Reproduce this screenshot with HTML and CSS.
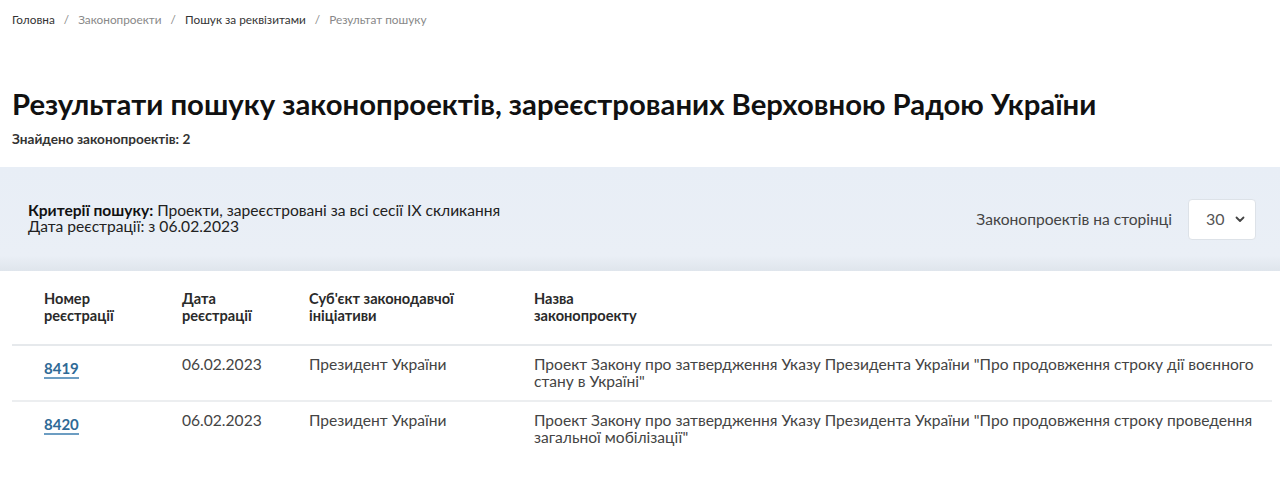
FILE: index.html
```html
<!DOCTYPE html>
<html lang="uk">
<head>
    <meta charset="UTF-8">
    <title>Результати пошуку законопроектів</title>
    <link rel="stylesheet" href="styles.css">
</head>
<body>
    <!-- Breadcrumbs -->
    <div class="breadcrumbs">
        <a href="#" class="crumb">Головна</a>
        <span class="sep">/</span>
        <a href="#" class="crumb muted">Законопроекти</a>
        <span class="sep">/</span>
        <a href="#" class="crumb">Пошук за реквізитами</a>
        <span class="sep">/</span>
        <span class="crumb muted">Результат пошуку</span>
    </div>

    <div class="heading">
        <h1>Результати пошуку законопроектів, зареєстрованих Верховною Радою України</h1>
        <div class="found">Знайдено законопроектів: 2</div>
    </div>

    <!-- Search criteria -->
    <div class="criteria">
        <div class="criteria-text">
            <div><b>Критерії пошуку:</b> Проекти, зареєстровані за всі сесії IX скликання</div>
            <div>Дата реєстрації: з 06.02.2023</div>
        </div>
        <div class="per-page">
            <span>Законопроектів на сторінці</span>
            <div class="select">
                <span>30</span>
                <svg width="10" height="7" viewBox="0 0 10 7"><path d="M1.5 1.5 L5 5 L8.5 1.5" fill="none" stroke="#444" stroke-width="1.8" stroke-linecap="round" stroke-linejoin="round"/></svg>
            </div>
        </div>
    </div>

    <!-- Results -->
    <table class="results">
        <thead>
            <tr>
                <th class="col-num">Номер<br>реєстрації</th>
                <th class="col-date">Дата<br>реєстрації</th>
                <th class="col-subj">Суб'єкт законодавчої<br>ініціативи</th>
                <th>Назва<br>законопроекту</th>
            </tr>
        </thead>
        <tbody>
            <tr>
                <td class="col-num"><a href="#">8419</a></td>
                <td>06.02.2023</td>
                <td>Президент України</td>
                <td>Проект Закону про затвердження Указу Президента України "Про продовження строку дії воєнного стану в Україні"</td>
            </tr>
            <tr>
                <td class="col-num"><a href="#">8420</a></td>
                <td>06.02.2023</td>
                <td>Президент України</td>
                <td>Проект Закону про затвердження Указу Президента України "Про продовження строку проведення загальної мобілізації"</td>
            </tr>
        </tbody>
    </table>
</body>
</html>
```

FILE: styles.css
```css
body {
    margin: 0;
    font-family: Lato, "Open Sans", sans-serif;
    color: #333;
    background: #fff;
}

a {
    text-decoration: none;
}

/* Breadcrumbs */
.breadcrumbs {
    padding: 12px 12px 0;
    font-size: 11.8px;
    line-height: 16px;
    display: flex;
    gap: 9px;
}

.crumb {
    color: #333;
}

.crumb.muted,
.sep {
    color: #888;
}

/* Heading */
.heading {
    padding: 0 12px;
    margin-top: 58px;
}

h1 {
    margin: 0;
    font-size: 29.3px;
    line-height: 36px;
    font-weight: 700;
    color: #111;
}

.found {
    margin-top: 9px;
    font-size: 13.6px;
    line-height: 16px;
    font-weight: 700;
    color: #333;
}

/* Criteria band */
.criteria {
    margin-top: 20px;
    height: 104px;
    box-sizing: border-box;
    padding: 0 24px 0 28px;
    background: linear-gradient(#e8eef6, #eaeff6 85%, #dfe5ec);
    display: flex;
    align-items: center;
    justify-content: space-between;
    font-size: 15.6px;
    line-height: 16px;
    color: #222;
}

.criteria-text {
    margin-top: -2px;
}

.criteria-text b {
    color: #111;
}

.per-page {
    display: flex;
    align-items: center;
    gap: 16px;
    color: #444;
}

.select {
    width: 68px;
    height: 41px;
    box-sizing: border-box;
    background: #fff;
    border: 1px solid #dde2e8;
    border-radius: 4px;
    display: flex;
    align-items: center;
    justify-content: space-between;
    padding: 0 10px 0 17px;
    font-size: 16px;
    color: #555;
}

/* Results table */
.results {
    margin: 19px 8px 0 12px;
    width: 1260px;
    border-collapse: collapse;
    font-size: 15.6px;
    line-height: 17px;
}

.results th {
    text-align: left;
    vertical-align: top;
    font-size: 14.6px;
    font-weight: 700;
    color: #2a2a2a;
    padding: 0 0 20px;
    border-bottom: 2px solid #e6e9ec;
}

.results td {
    vertical-align: top;
    color: #444;
    padding: 10px 0 10px;
    border-bottom: 2px solid #eceef0;
}

.results tbody tr:last-child td {
    border-bottom: none;
}

.results .col-num {
    width: 138px;
    padding-left: 32px;
}

.results th.col-date {
    width: 127px;
}

.results th.col-subj {
    width: 225px;
}

.results td a {
    display: inline-block;
    margin-top: 3px;
    font-weight: 700;
    font-size: 15px;
    color: #2f6a96;
    border-bottom: 2px solid #6c9dc2;
    line-height: 18px;
}
```
